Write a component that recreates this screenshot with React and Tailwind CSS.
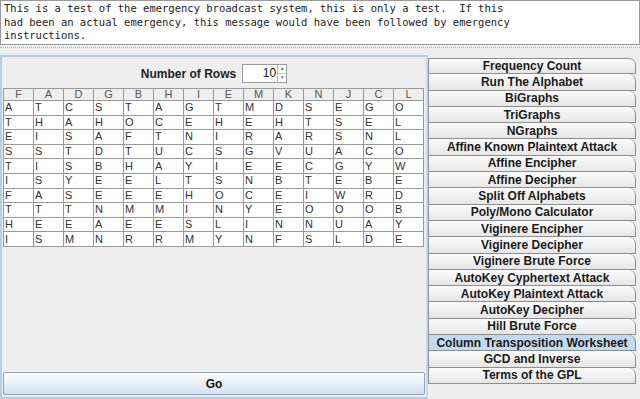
import React from 'react';

const columns = ['F', 'A', 'D', 'G', 'B', 'H', 'I', 'E', 'M', 'K', 'N', 'J', 'C', 'L'];

const rows = [
    'ATCSTAGTMDSEGO',
    'THAHOCEHEHTSEL',
    'EISAFTNIRARSNL',
    'SSTDTUCSGVUACO',
    'TISBHAYIEECGYW',
    'ISYEELTSNBTEBE',
    'FASEEEHOCEIWRD',
    'TTTNMMINYEOOOB',
    'HEEAEESLINNUAY',
    'ISMNRRMYNFSLDE'
];

const tools = [
    'Frequency Count',
    'Run The Alphabet',
    'BiGraphs',
    'TriGraphs',
    'NGraphs',
    'Affine Known Plaintext Attack',
    'Affine Encipher',
    'Affine Decipher',
    'Split Off Alphabets',
    'Poly/Mono Calculator',
    'Viginere Encipher',
    'Viginere Decipher',
    'Viginere Brute Force',
    'AutoKey Cyphertext Attack',
    'AutoKey Plaintext Attack',
    'AutoKey Decipher',
    'Hill Brute Force',
    'Column Transposition Worksheet',
    'GCD and Inverse',
    'Terms of the GPL'
];

const message =
    'This is a test of the emergency broadcast system, this is only a test.  If this\n' +
    'had been an actual emergency, this message would have been followed by emergency\n' +
    'instructions.';

const App = () => {
    return (
        <div className="w-[640px] h-[399px] bg-[#eeeeee] flex flex-col overflow-hidden font-['Liberation_Sans',sans-serif]">
            {/* message area */}
            <div className="h-[45px] shrink-0 bg-white border border-[#9a9a9a] px-[3px] pt-px font-['DejaVu_Sans_Mono',monospace] text-[10.5px] leading-[13.5px] text-[#222] whitespace-pre">
                {message}
            </div>

            {/* split divider */}
            <div className="h-[8px] shrink-0 border-t border-dotted border-[#b0b0b0] mt-[2px]" />

            <div className="flex flex-1 min-h-0">
                {/* worksheet */}
                <div className="w-[428px] shrink-0 flex flex-col border-2 border-[#b8cce2] border-r-[#c9d8e8] bg-[#eeeeee]">
                    <div className="flex items-center justify-center gap-[6px] mt-[7px] h-[19px]">
                        <span className="text-[12px] font-bold text-[#222]">Number of Rows</span>
                        <div className="w-[45px] h-[19px] flex bg-white border border-[#9a9a9a]">
                            <span className="flex-1 text-right text-[12px] leading-[17px] text-[#222] pr-[1px]">10</span>
                            <div className="w-[9px] flex flex-col border-l border-[#b5b5b5]">
                                <span className="flex-1 flex items-center justify-center text-[5px] text-[#777] border-b border-[#c5c5c5]">▲</span>
                                <span className="flex-1 flex items-center justify-center text-[5px] text-[#777]">▼</span>
                            </div>
                        </div>
                    </div>

                    <div className="mt-[5px] ml-px w-[421px] border-l border-t border-[#999] text-[11px] text-[#333]">
                        <div className="flex">
                            {columns.map((c) => (
                                <div key={c} className="w-[30px] h-[12px] flex items-center justify-center bg-[#eeeeee] border-r border-b border-[#999] text-[#555] leading-none">
                                    {c}
                                </div>
                            ))}
                        </div>
                        {rows.map((r, i) => (
                            <div key={i} className="flex">
                                {r.split('').map((ch, j) => (
                                    <div key={j} className="w-[30px] h-[14.6px] flex items-center pl-[1px] bg-white border-r border-b border-[#999] leading-none">
                                        {ch}
                                    </div>
                                ))}
                            </div>
                        ))}
                    </div>

                    <div className="flex-1" />

                    <button className="mx-px mb-[2px] h-[23px] border border-[#8fa2b8] rounded-[2px] bg-gradient-to-b from-[#ffffff] to-[#d3e1f0] text-[12px] font-bold text-[#111]">
                        Go
                    </button>
                </div>

                {/* tool buttons */}
                <div className="flex-1 flex flex-col pt-[3px] pr-[4px]">
                    {tools.map((t, i) => (
                        <div
                            key={t}
                            className={
                                'h-[16.3px] shrink-0 flex items-center justify-center border-l border-r border-b border-[#8e8e8e] rounded-tr-[7px] text-[12px] font-bold leading-none text-[#1a1a1a] ' +
                                (i === 0 ? 'border-t ' : '') +
                                (t === 'Column Transposition Worksheet'
                                    ? 'bg-[#c4d8ee]'
                                    : 'bg-gradient-to-b from-[#fbfbfb] to-[#e6e6e6]')
                            }
                        >
                            {t}
                        </div>
                    ))}
                </div>
            </div>
        </div>
    );
};

export default App;
